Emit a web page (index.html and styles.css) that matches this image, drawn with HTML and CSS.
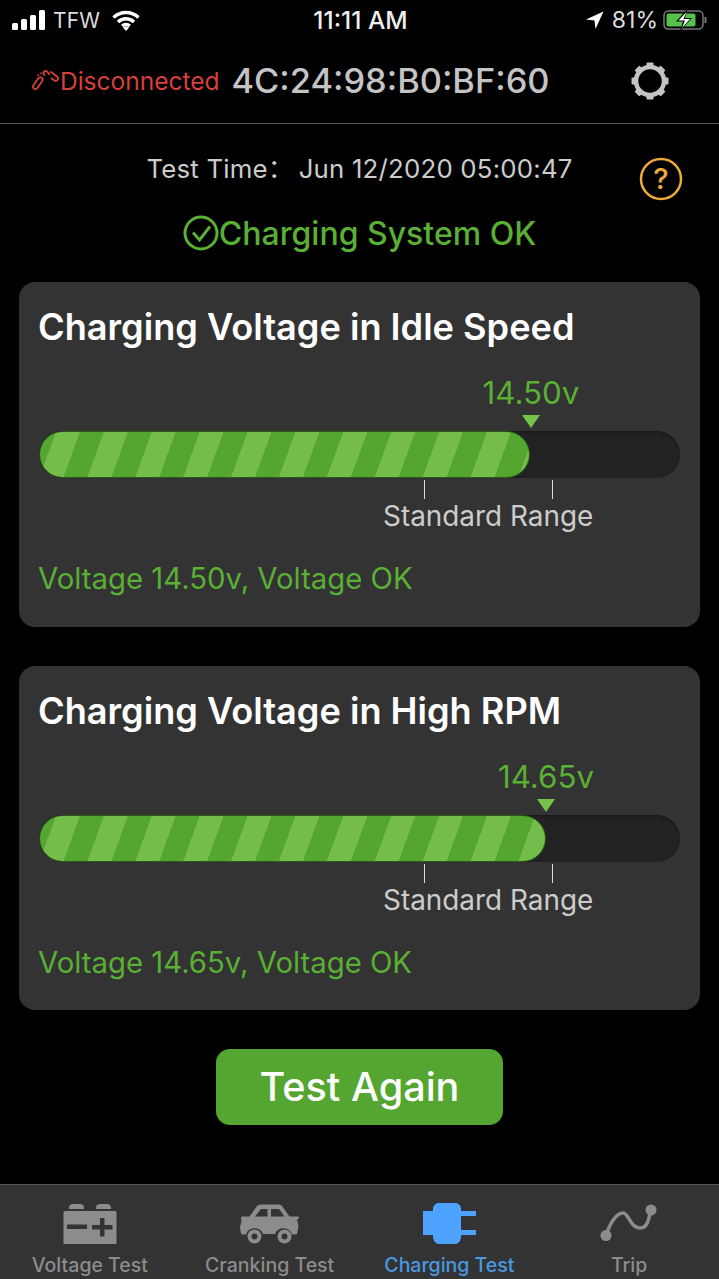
FILE: index.html
```html
<!DOCTYPE html>
<html lang="en">
<head>
	<meta charset="UTF-8">
	<title>Charging Test</title>
	<link rel="stylesheet" href="styles.css">
</head>
<body>
	<div class="app">
		<div class="statusbar">
			<div class="sb-left">
				<svg class="sb-signal" width="34" height="20" viewBox="0 0 34 20"><rect x="0" y="13" width="6" height="7" rx="1.5"/><rect x="9" y="9" width="6" height="11" rx="1.5"/><rect x="18" y="5" width="6" height="15" rx="1.5"/><rect x="27" y="0" width="6" height="20" rx="1.5"/></svg>
				<span class="sb-carrier">TFW</span>
				<svg class="sb-wifi" width="28" height="21" viewBox="0 0 28 21"><path d="M1.5 7.5a18 18 0 0 1 25 0" /><path d="M6 12a11.500 11.500 0 0 1 16 0"/><path d="M10.200 16a5.500 5.500 0 0 1 7.600 0"/><path class="dot" d="M14 21l-3-3.200a4.300 4.300 0 0 1 6 0z"/></svg>
			</div>
			<div class="sb-time">11:11 AM</div>
			<div class="sb-right">
				<svg width="18" height="18" viewBox="0 0 18 18"><path fill="#fff" d="M17.500 .5L0 8.500l8.500 1 1 8.500z"/></svg>
				<span class="sb-pct">81%</span>
				<svg width="46" height="22" viewBox="0 0 46 22"><rect x="1" y="2" width="39" height="18" rx="4.500" fill="none" stroke="#777" stroke-width="1.500"/><rect x="3.500" y="4.500" width="29" height="13" rx="2" fill="#55c24a"/><path d="M42.500 8v6" stroke="#777" stroke-width="2" fill="none"/><path d="M24.500 0L13 12.500h7L17 22l12-13h-7z" fill="#000"/><path d="M23.500 3L15.500 11.500h6.500L19 19l8-9h-6.500z" fill="#fff"/></svg>
			</div>
		</div>

		<header class="topbar">
			<svg class="link-icon" width="30" height="24" viewBox="0 0 30 24" fill="none" stroke="#d93f3c" stroke-width="1.800"><path d="M3.500 16l4.500-6.500c1-1.300 2.800-1.500 3.800-.7 1 .8 1.100 2.300.3 3.500l-4.500 6.500c-1 1.300-2.600 1.700-3.700.8C3 18.800 2.700 17.300 3.500 16z"/><path d="M15 6.500l-1-1c-.9-1-.7-2.300.2-3 .9-.7 2.200-.6 3 .2l2.500 3"/><path d="M20.500 2.500l6.500 5c1.200 1 1.200 2.500.5 3.400-.8 1-2.300 1.200-3.400.4l-3-2.300"/><path d="M8 5.500l.5 1.500M11 3.500l.3 1.500"/></svg>
			<span class="conn">Disconnected</span>
			<span class="mac">4C:24:98:B0:BF:60</span>
			<svg class="gear" width="40" height="40" viewBox="0 0 40 40"><circle cx="20" cy="20" r="14" fill="none" stroke="#c4c4c4" stroke-width="4.500"/><g fill="#c4c4c4"><rect x="16.500" y="1.500" width="7" height="6" rx="1"/><rect x="16.500" y="1.500" width="7" height="6" rx="1" transform="rotate(45 20 20)"/><rect x="16.500" y="1.500" width="7" height="6" rx="1" transform="rotate(90 20 20)"/><rect x="16.500" y="1.500" width="7" height="6" rx="1" transform="rotate(135 20 20)"/><rect x="16.500" y="1.500" width="7" height="6" rx="1" transform="rotate(180 20 20)"/><rect x="16.500" y="1.500" width="7" height="6" rx="1" transform="rotate(225 20 20)"/><rect x="16.500" y="1.500" width="7" height="6" rx="1" transform="rotate(270 20 20)"/><rect x="16.500" y="1.500" width="7" height="6" rx="1" transform="rotate(315 20 20)"/></g></svg>
		</header>

		<main class="content">
			<div class="test-time">
				<span class="test-time-text">Test Time：&#8201;Jun 12/2020 05:00:47</span>
				<svg class="help" width="44" height="44" viewBox="0 0 44 44"><circle cx="22" cy="22" r="20" fill="none" stroke="#eeaa3c" stroke-width="2.500"/><text x="22" y="32" text-anchor="middle" class="help-mark">?</text></svg>
			</div>

			<div class="result">
				<svg width="36" height="36" viewBox="0 0 36 36" fill="none" stroke="#5aaf35" stroke-width="3"><circle cx="18" cy="18" r="16"/><path d="M10 17.500l6.500 7.500L27 11.500"/></svg>
				<span>Charging System OK</span>
			</div>

			<section class="card">
				<h2 class="card-title">Charging Voltage in Idle Speed</h2>
				<div class="marker" style="margin-left:432px">
					<span class="marker-value">14.50v</span>
					<i class="marker-arrow"></i>
				</div>
				<div class="bar"><div class="bar-fill" style="width:491px"></div></div>
				<div class="range">
					<div class="range-ticks"><i></i><i></i></div>
					<span class="range-label">Standard Range</span>
				</div>
				<p class="card-note">Voltage 14.50v, Voltage OK</p>
			</section>

			<section class="card">
				<h2 class="card-title">Charging Voltage in High RPM</h2>
				<div class="marker" style="margin-left:447px">
					<span class="marker-value">14.65v</span>
					<i class="marker-arrow"></i>
				</div>
				<div class="bar"><div class="bar-fill" style="width:507px"></div></div>
				<div class="range">
					<div class="range-ticks"><i></i><i></i></div>
					<span class="range-label">Standard Range</span>
				</div>
				<p class="card-note">Voltage 14.65v, Voltage OK</p>
			</section>

			<div class="action"><button class="btn-again">Test Again</button></div>
		</main>

		<nav class="tabs">
			<a class="tab">
				<svg width="56" height="42" viewBox="0 0 56 42" fill="#8c8c8c"><path d="M7 6c0-3 2-4 4-4h7c2 0 4 1 4 4v1H7zM34 6c0-3 2-4 4-4h7c2 0 4 1 4 4v1H34z"/><path fill-rule="evenodd" d="M3 9h50a1.500 1.500 0 0 1 1.500 1.500V41a1.500 1.500 0 0 1-1.500 1.500H3A1.500 1.500 0 0 1 1.500 41V10.500A1.500 1.500 0 0 1 3 9zM5 22.500v4.500h20v-4.500zM38 16v7h-8v4.500h8v7h4.500v-7h8V23h-8v-7z"/></svg>
				<span>Voltage Test</span>
			</a>
			<a class="tab">
				<svg width="60" height="42" viewBox="0 0 60 42" fill="#8c8c8c"><path fill-rule="evenodd" d="M17 4c1-1 2.500-1.500 4-1.500h17c1.500 0 3 .5 4 1.500l7.500 10.500h8c1 0 1.500 .5 1.500 1.500l-2 2 1.500 6-1 6.500c-.3 1.500-1 2-2.500 2h-3a9 9 0 0 0-17-.5H23a9 9 0 0 0-17 .5H3c-1.500 0-2-1-2.300-2L0 25l1.500-6L1 16c0-1 .5-1.500 1.500-1.500h7zM21 7l-6 7.500h12.500V7zM31 7v7.500h13.500L39 7z"/><path fill-rule="evenodd" d="M14.500 27.500a7 7 0 1 1 0 14 7 7 0 0 1 0-14zm0 4a3 3 0 1 0 0 6 3 3 0 0 0 0-6zM44.500 27.500a7 7 0 1 1 0 14 7 7 0 0 1 0-14zm0 4a3 3 0 1 0 0 6 3 3 0 0 0 0-6z"/></svg>
				<span>Cranking Test</span>
			</a>
			<a class="tab tab-active">
				<svg width="54" height="42" viewBox="0 0 54 42" fill="#4da3ff"><path d="M11 9V7c0-3.500 3-6 6-6h16c3.500 0 6 2.500 6 6v2h15.500v5H39v14h15.500v5H39v2c0 3.500-2.500 7-6 7H17c-3 0-6-3.500-6-7v-2H1V9z"/></svg>
				<span>Charging Test</span>
			</a>
			<a class="tab">
				<svg width="58" height="42" viewBox="0 0 58 42"><path d="M6 34C10 20 17 11 23 11c6 0 7 15 17 15 8 0 9-10 11-19" fill="none" stroke="#8c8c8c" stroke-width="3.500"/><circle cx="6" cy="33.500" r="5.500" fill="#8c8c8c"/><circle cx="51" cy="8" r="5.500" fill="#8c8c8c"/></svg>
				<span>Trip</span>
			</a>
		</nav>
	</div>
</body>
</html>
```

FILE: styles.css
```css
*{box-sizing: border-box;}
html,body{margin:0;padding:0;background:#000;}
body{font-family:Inter,"Noto Sans CJK SC",sans-serif;}
h2,p{margin:0;}
i{display:block;}
.app{
	width:719px;
	height:1279px;
	display:flex;
	flex-direction:column;
	overflow:hidden;
	background:#000;
}

.statusbar{
	height:40px;
	display:grid;
	grid-template-columns:1fr auto 1fr;
	align-items:center;
	padding:0 10px 0 12px;
	color:#eee;
	font-size:21px;
}
.sb-left{display:flex;align-items:center;}
.sb-signal{fill:#fff;margin-right:7px;}
.sb-carrier{letter-spacing:.2px;color:#ddd;margin-right:12px;}
.sb-wifi{fill:none;stroke:#fff;stroke-width:3.400;}
.sb-wifi .dot{fill:#fff;stroke:none;}
.sb-time{font-size:24.500px;font-weight:500;}
.sb-right{display:flex;align-items:center;justify-content:flex-end;gap:8px;}
.sb-pct{color:#ddd;font-size:23px;margin-right:-3px;}

.topbar{
	height:84px;
	display:flex;
	align-items:center;
	padding:0 0 2px 30px;
	border-bottom:1px solid #555;
}
.conn{color:#d93f3c;font-size:24.500px;}
.mac{color:#c4c4c4;font-size:34.400px;font-weight:500;margin-left:12px;}
.gear{margin-left:80px;}

.content{flex:1;padding:0 19px;}
.test-time{
	height:88px;
	display:grid;
	grid-template-columns:1fr auto 1fr;
}
.test-time-text{grid-column:2;color:#ccc;font-size:25.800px;letter-spacing:.2px;padding-top:24px;white-space:nowrap;}
.help{grid-column:3;justify-self:end;margin:33px 17px 0 0;}
.help-mark{fill:#eeaa3c;font-size:29px;font-weight:500;}
.result{
	display:flex;
	align-items:center;
	justify-content:center;
	color:#5aaf35;
	font-size:32px;
	font-weight:500;
	height:46px;
	margin-top:-2px;
}
.card{
	height:345px;
	margin-top:26px;
	padding:20px 20px 0;
	background:#333;
	border-radius:16px;
}
.card + .card{height:344px;margin-top:39px;}
.card-title{color:#fff;font-size:36.150px;font-weight:600;line-height:50px;margin-left:-1px;white-space:nowrap;}
.marker{
	width:120px;
	display:flex;
	flex-direction:column;
	align-items:center;
	margin-top:20px;
}
.marker-value{color:#5aaf35;font-size:31.300px;line-height:42px;}
.marker-arrow{
	width:0;
	height:0;
	margin-top:1px;
	border-left:9px solid transparent;
	border-right:9px solid transparent;
	border-top:13px solid #74c44c;
}
.bar{
	height:47px;
	margin-top:3px;
	border-radius:24px;
	background:#222;
	box-shadow:inset 0 1px 3px rgba(0,0,0,.4);
	overflow:hidden;
}
.bar-fill{
	height:100%;
	border-radius:24px;
	border:1px solid #2a5a18;
	background:repeating-linear-gradient(110deg,#55a630 0,#55a630 15px,#74bc4b 15px,#74bc4b 37.500px,#55a630 37.500px,#55a630 45px);
}
.range{width:220px;margin-left:345px;}
.range-ticks{
	display:flex;
	justify-content:space-between;
	width:129px;
	height:19px;
	margin:2px 0 0 40px;
}
.range-ticks i{width:1px;background:#ddd;}
.range-label{display:block;color:#ccc;font-size:27.900px;line-height:36px;margin:-1px 0 0 -1px;white-space:nowrap;}
.card-note{color:#5aaf35;font-size:29.300px;line-height:40px;margin:25px 0 0 -1px;white-space:nowrap;}

.action{display:flex;justify-content:center;margin-top:39px;}
.btn-again{
	width:287px;
	height:76px;
	border:0;
	border-radius:14px;
	background:#55a630;
	color:#fff;
	font-family:inherit;
	font-size:39.600px;
	font-weight:500;
}

.tabs{
	height:95px;
	display:grid;
	grid-template-columns:repeat(4,1fr);
	background:#333;
	border-top:1px solid #555;
}
.tab{
	display:flex;
	flex-direction:column;
	align-items:center;
	padding-top:17px;
	color:#8c8c8c;
	font-size:19.500px;
	font-weight:500;
	gap:9px;
}
.tab-active{color:#4a98e0;}
```
